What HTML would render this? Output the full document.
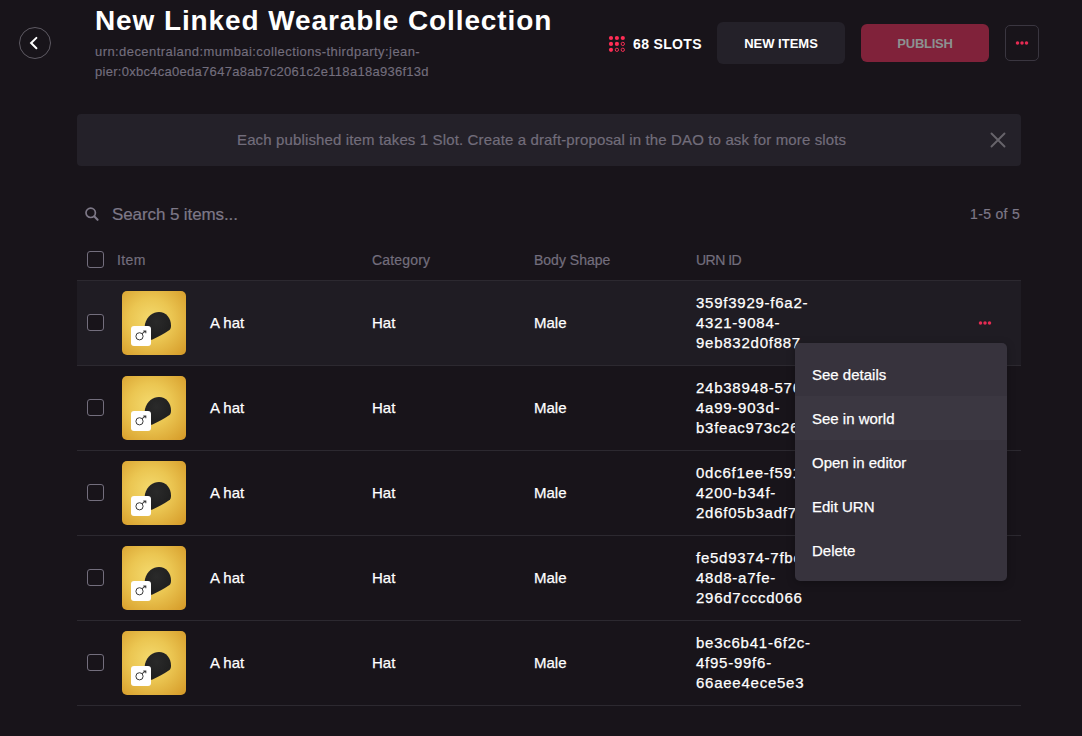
<!DOCTYPE html>
<html><head><meta charset="utf-8"><style>
*{box-sizing:border-box;margin:0;padding:0}
html,body{width:1082px;height:736px;overflow:hidden;background:#18141a;font-family:"Liberation Sans",sans-serif;color:#fff}
.abs{position:absolute}
.back{left:19px;top:27px;width:32px;height:32px;border:1px solid #5e5a63;border-radius:50%}
.back svg{position:absolute;left:0;top:0}
.title{left:95px;top:4px;font-size:28px;font-weight:bold;line-height:34px;white-space:nowrap;letter-spacing:0.89px}
.urn{left:95px;-webkit-text-stroke-width:0.15px;font-size:13px;line-height:20px;color:#736e7d;white-space:nowrap}
.slotstxt{left:633px;top:36px;font-size:14px;font-weight:bold;line-height:17px;letter-spacing:0.35px}
.btn{border-radius:6px;font-size:13px;font-weight:bold;text-align:center}
.newitems{left:717px;top:22px;width:128px;height:42px;line-height:44px;background:#242129}
.publish{left:861px;top:24px;width:128px;height:38px;line-height:40px;background:#80223a;color:#8c9191;letter-spacing:-0.25px}
.more{left:1005px;top:25px;width:34px;height:36px;border:1px solid #3a3640;border-radius:5px}
.banner{left:77px;top:114px;width:944px;height:52px;background:#242129;border-radius:4px}
.bantxt{-webkit-text-stroke-width:0.2px;left:237px;top:129.8px;font-size:15px;color:#726d7b;line-height:20px;white-space:nowrap;letter-spacing:0.136px}
.search{-webkit-text-stroke-width:0.2px;left:112px;top:205px;font-size:17px;color:#7d7887;line-height:20px;letter-spacing:-0.1px}
.count{-webkit-text-stroke-width:0.2px;left:900px;top:206px;width:120px;text-align:right;font-size:14px;color:#7d7887;line-height:16px;letter-spacing:0.3px}
.th{-webkit-text-stroke-width:0.2px;top:252px;font-size:14px;color:#736e7d;line-height:16px}
.cb{width:17px;height:17px;border:1.5px solid #736e7d;border-radius:3px;background:#18141a}
.hline{left:77px;width:944px;height:1px;background:#2c2930}
.rowbg{left:77px;width:944px;height:85px}
.thumb{width:64px;height:64px;border-radius:5px;background:radial-gradient(circle at 45% 45%,#f4da6e 0%,#ebc652 42%,#d49826 100%);overflow:hidden}
.thumb svg{position:absolute;left:0;top:0}
.badge{left:9px;top:35px;width:20px;height:20px;background:#fff;border-radius:3px}
.td{font-size:15px;line-height:20px;white-space:nowrap;-webkit-text-stroke-width:0.25px}
.urnc{letter-spacing:0.75px}
.menu{left:795px;top:343px;width:212px;height:238px;background:#37333d;border-radius:5px;padding:9px 0;box-shadow:0 2px 8px rgba(0,0,0,0.25)}
.mi{height:44px;line-height:46px;padding-left:17px;font-size:15px;white-space:nowrap;-webkit-text-stroke-width:0.25px}
.mi.hov{background:#3b3741}
</style></head><body>
<div class="abs back"><svg width="30" height="30" viewBox="0 0 30 30"><path d="M16.4 9.9 L11.1 15 L16.4 20.2" fill="none" stroke="#fff" stroke-width="2" stroke-linecap="round" stroke-linejoin="miter"/></svg></div>
<div class="abs title">New Linked Wearable Collection</div>
<div class="abs urn" style="top:42px;letter-spacing:0.43px">urn:decentraland:mumbai:collections-thirdparty:jean-</div>
<div class="abs urn" style="top:62px;letter-spacing:0.28px">pier:0xbc4ca0eda7647a8ab7c2061c2e118a18a936f13d</div>
<svg class="abs" style="left:605px;top:32px" width="24" height="24" viewBox="0 0 24 24"><circle cx="6.00" cy="6.00" r="2.1" fill="#ff2d55"/><circle cx="11.90" cy="6.00" r="2.1" fill="#ff2d55"/><circle cx="17.80" cy="6.00" r="2.1" fill="#ff2d55"/><circle cx="6.00" cy="11.90" r="2.1" fill="#ff2d55"/><circle cx="11.90" cy="11.90" r="2.1" fill="#ff2d55"/><circle cx="17.80" cy="11.90" r="1.65" fill="none" stroke="#ff2d55" stroke-width="0.95"/><circle cx="6.00" cy="17.80" r="2.1" fill="#ff2d55"/><circle cx="11.90" cy="17.80" r="1.65" fill="none" stroke="#ff2d55" stroke-width="0.95"/><circle cx="17.80" cy="17.80" r="1.65" fill="none" stroke="#ff2d55" stroke-width="0.95"/></svg>
<div class="abs slotstxt">68 SLOTS</div>
<div class="abs btn newitems">NEW ITEMS</div>
<div class="abs btn publish">PUBLISH</div>
<div class="abs more"></div>
<svg class="abs" style="left:1015px;top:40px" width="14" height="6" viewBox="0 0 14 6"><circle cx="2.5" cy="3" r="1.75" fill="#e62b53"/><circle cx="7" cy="3" r="1.75" fill="#e62b53"/><circle cx="11.5" cy="3" r="1.75" fill="#e62b53"/></svg>
<div class="abs banner"></div>
<div class="abs bantxt">Each published item takes 1 Slot. Create a draft-proposal in the DAO to ask for more slots</div>
<svg class="abs" style="left:990px;top:132px" width="16" height="16" viewBox="0 0 16 16"><path d="M1.5 1.5 L14.5 14.5 M14.5 1.5 L1.5 14.5" stroke="#67646b" stroke-width="1.9" stroke-linecap="round" fill="none"/></svg>
<svg class="abs" style="left:84px;top:206px" width="16" height="16" viewBox="0 0 16 16"><circle cx="6.7" cy="6.8" r="4.7" fill="none" stroke="#7d7887" stroke-width="1.7"/><path d="M10.2 10.3 L13.6 13.8" stroke="#7d7887" stroke-width="2.1" stroke-linecap="round"/></svg>
<div class="abs search">Search 5 items...</div>
<div class="abs count">1-5 of 5</div>
<div class="abs cb" style="left:87px;top:251px"></div>
<div class="abs th" style="left:117px;letter-spacing:0.4px">Item</div>
<div class="abs th" style="left:372px;letter-spacing:0.17px">Category</div>
<div class="abs th" style="left:534px">Body Shape</div>
<div class="abs th" style="left:696px;letter-spacing:-0.5px">URN ID</div>
<div class="abs hline" style="top:280px"></div>
<div class="abs rowbg" style="top:281px;height:84px;background:#1f1c23"></div>
<div class="abs hline" style="top:365px"></div>
<div class="abs cb" style="left:87px;top:314px"></div>
<div class="abs thumb" style="left:122px;top:291px"><svg width="64" height="64" viewBox="0 0 64 64"><defs><radialGradient id="hg" cx="0.45" cy="0.35" r="0.7"><stop offset="0" stop-color="#2a2a2a"/><stop offset="1" stop-color="#1d1d1d"/></radialGradient></defs><path d="M23 33 C25 25 31 21 37 21 C44 21 49 27 49 34.5 C49 36.5 48.5 38 47.5 39 C42 43 36 46 30 48.7 C27 49.5 24 47 23 44 C22.5 40 22.5 36 23 33 Z" fill="url(#hg)"/></svg><div class="abs badge"><svg width="20" height="20" viewBox="0 0 20 20"><circle cx="8.5" cy="10.3" r="3.6" fill="none" stroke="#3a3a3a" stroke-width="1"/><path d="M11.1 7.7 L14.8 4.9 M12.3 4.9 H14.8 V7.3" fill="none" stroke="#3a3a3a" stroke-width="1.05"/></svg></div></div>
<div class="abs td" style="left:210px;top:313px">A hat</div>
<div class="abs td" style="left:372px;top:313px">Hat</div>
<div class="abs td" style="left:534px;top:313px">Male</div>
<div class="abs td urnc" style="left:696px;top:293px">359f3929-f6a2-<br>4321-9084-<br>9eb832d0f887</div>
<svg class="abs" style="left:978px;top:320px" width="14" height="6" viewBox="0 0 14 6"><circle cx="2.5" cy="3" r="1.75" fill="#e62b53"/><circle cx="7" cy="3" r="1.75" fill="#e62b53"/><circle cx="11.5" cy="3" r="1.75" fill="#e62b53"/></svg>
<div class="abs hline" style="top:450px"></div>
<div class="abs cb" style="left:87px;top:399px"></div>
<div class="abs thumb" style="left:122px;top:376px"><svg width="64" height="64" viewBox="0 0 64 64"><defs><radialGradient id="hg" cx="0.45" cy="0.35" r="0.7"><stop offset="0" stop-color="#2a2a2a"/><stop offset="1" stop-color="#1d1d1d"/></radialGradient></defs><path d="M23 33 C25 25 31 21 37 21 C44 21 49 27 49 34.5 C49 36.5 48.5 38 47.5 39 C42 43 36 46 30 48.7 C27 49.5 24 47 23 44 C22.5 40 22.5 36 23 33 Z" fill="url(#hg)"/></svg><div class="abs badge"><svg width="20" height="20" viewBox="0 0 20 20"><circle cx="8.5" cy="10.3" r="3.6" fill="none" stroke="#3a3a3a" stroke-width="1"/><path d="M11.1 7.7 L14.8 4.9 M12.3 4.9 H14.8 V7.3" fill="none" stroke="#3a3a3a" stroke-width="1.05"/></svg></div></div>
<div class="abs td" style="left:210px;top:398px">A hat</div>
<div class="abs td" style="left:372px;top:398px">Hat</div>
<div class="abs td" style="left:534px;top:398px">Male</div>
<div class="abs td urnc" style="left:696px;top:378px">24b38948-576c-<br>4a99-903d-<br>b3feac973c26</div>
<div class="abs hline" style="top:535px"></div>
<div class="abs cb" style="left:87px;top:484px"></div>
<div class="abs thumb" style="left:122px;top:461px"><svg width="64" height="64" viewBox="0 0 64 64"><defs><radialGradient id="hg" cx="0.45" cy="0.35" r="0.7"><stop offset="0" stop-color="#2a2a2a"/><stop offset="1" stop-color="#1d1d1d"/></radialGradient></defs><path d="M23 33 C25 25 31 21 37 21 C44 21 49 27 49 34.5 C49 36.5 48.5 38 47.5 39 C42 43 36 46 30 48.7 C27 49.5 24 47 23 44 C22.5 40 22.5 36 23 33 Z" fill="url(#hg)"/></svg><div class="abs badge"><svg width="20" height="20" viewBox="0 0 20 20"><circle cx="8.5" cy="10.3" r="3.6" fill="none" stroke="#3a3a3a" stroke-width="1"/><path d="M11.1 7.7 L14.8 4.9 M12.3 4.9 H14.8 V7.3" fill="none" stroke="#3a3a3a" stroke-width="1.05"/></svg></div></div>
<div class="abs td" style="left:210px;top:483px">A hat</div>
<div class="abs td" style="left:372px;top:483px">Hat</div>
<div class="abs td" style="left:534px;top:483px">Male</div>
<div class="abs td urnc" style="left:696px;top:463px">0dc6f1ee-f591-<br>4200-b34f-<br>2d6f05b3adf7</div>
<div class="abs hline" style="top:620px"></div>
<div class="abs cb" style="left:87px;top:569px"></div>
<div class="abs thumb" style="left:122px;top:546px"><svg width="64" height="64" viewBox="0 0 64 64"><defs><radialGradient id="hg" cx="0.45" cy="0.35" r="0.7"><stop offset="0" stop-color="#2a2a2a"/><stop offset="1" stop-color="#1d1d1d"/></radialGradient></defs><path d="M23 33 C25 25 31 21 37 21 C44 21 49 27 49 34.5 C49 36.5 48.5 38 47.5 39 C42 43 36 46 30 48.7 C27 49.5 24 47 23 44 C22.5 40 22.5 36 23 33 Z" fill="url(#hg)"/></svg><div class="abs badge"><svg width="20" height="20" viewBox="0 0 20 20"><circle cx="8.5" cy="10.3" r="3.6" fill="none" stroke="#3a3a3a" stroke-width="1"/><path d="M11.1 7.7 L14.8 4.9 M12.3 4.9 H14.8 V7.3" fill="none" stroke="#3a3a3a" stroke-width="1.05"/></svg></div></div>
<div class="abs td" style="left:210px;top:568px">A hat</div>
<div class="abs td" style="left:372px;top:568px">Hat</div>
<div class="abs td" style="left:534px;top:568px">Male</div>
<div class="abs td urnc" style="left:696px;top:548px">fe5d9374-7fbc-<br>48d8-a7fe-<br>296d7cccd066</div>
<div class="abs hline" style="top:705px"></div>
<div class="abs cb" style="left:87px;top:654px"></div>
<div class="abs thumb" style="left:122px;top:631px"><svg width="64" height="64" viewBox="0 0 64 64"><defs><radialGradient id="hg" cx="0.45" cy="0.35" r="0.7"><stop offset="0" stop-color="#2a2a2a"/><stop offset="1" stop-color="#1d1d1d"/></radialGradient></defs><path d="M23 33 C25 25 31 21 37 21 C44 21 49 27 49 34.5 C49 36.5 48.5 38 47.5 39 C42 43 36 46 30 48.7 C27 49.5 24 47 23 44 C22.5 40 22.5 36 23 33 Z" fill="url(#hg)"/></svg><div class="abs badge"><svg width="20" height="20" viewBox="0 0 20 20"><circle cx="8.5" cy="10.3" r="3.6" fill="none" stroke="#3a3a3a" stroke-width="1"/><path d="M11.1 7.7 L14.8 4.9 M12.3 4.9 H14.8 V7.3" fill="none" stroke="#3a3a3a" stroke-width="1.05"/></svg></div></div>
<div class="abs td" style="left:210px;top:653px">A hat</div>
<div class="abs td" style="left:372px;top:653px">Hat</div>
<div class="abs td" style="left:534px;top:653px">Male</div>
<div class="abs td urnc" style="left:696px;top:633px">be3c6b41-6f2c-<br>4f95-99f6-<br>66aee4ece5e3</div>
<div class="abs menu"><div class="mi">See details</div><div class="mi hov">See in world</div><div class="mi">Open in editor</div><div class="mi">Edit URN</div><div class="mi">Delete</div></div>
</body></html>
